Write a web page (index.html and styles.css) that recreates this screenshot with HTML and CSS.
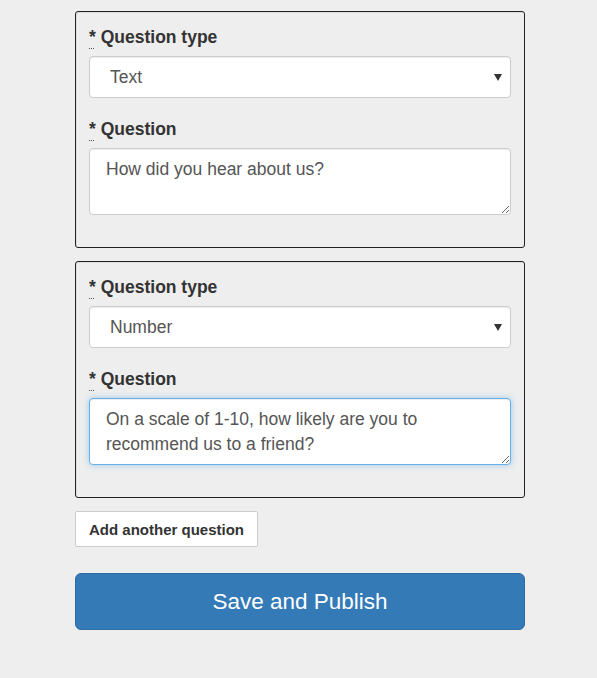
FILE: index.html
```html
<!DOCTYPE html>
<html>
<head>
<meta charset="utf-8">
<link rel="stylesheet" href="styles.css">
</head>
<body>
<div class="page">
  <fieldset class="qbox">
    <div class="group">
      <label class="lbl"><abbr class="req">*</abbr> Question type</label>
      <select class="ctl sel"><option>Text</option></select>
    </div>
    <div class="group">
      <label class="lbl"><abbr class="req">*</abbr> Question</label>
      <textarea class="ctl area">How did you hear about us?</textarea>
    </div>
  </fieldset>
  <fieldset class="qbox">
    <div class="group">
      <label class="lbl"><abbr class="req">*</abbr> Question type</label>
      <select class="ctl sel"><option>Number</option></select>
    </div>
    <div class="group">
      <label class="lbl"><abbr class="req">*</abbr> Question</label>
      <textarea class="ctl area focus">On a scale of 1-10, how likely are you to recommend us to a friend?</textarea>
    </div>
  </fieldset>
  <div class="actions">
    <button class="btn-add">Add another question</button>
  </div>
  <button class="btn-save">Save and Publish</button>
</div>
</body>
</html>
```
FILE: styles.css
```css
html, body {
  margin: 0;
  padding: 0;
  background: #eeeeee;
  font-family: "Liberation Sans", Arial, sans-serif;
  color: #333333;
}
.page {
  width: 450px;
  margin-left: 75px;
  padding-top: 11px;
}
.qbox {
  margin: 0 0 13px 0;
  padding: 13px 13px 14px 13px;
  border: 1px solid #222222;
  border-radius: 3px;
  box-shadow: inset 1px 1px 0 rgba(0,0,0,0.08);
  min-width: 0;
}
.group {
  margin-bottom: 19px;
  display: flex;
  flex-direction: column;
}
.group:last-child {
  margin-bottom: 18px;
}
.lbl {
  display: block;
  font-size: 17.5px;
  font-weight: bold;
  line-height: 24px;
  margin-bottom: 7px;
  color: #333333;
}
.req {
  text-decoration: underline dotted #555555;
  text-underline-offset: 5px;
  text-decoration-thickness: 1px;
  cursor: help;
}
.ctl {
  box-sizing: border-box;
  width: 100%;
  font-family: "Liberation Sans", Arial, sans-serif;
  font-size: 17.5px;
  color: #555555;
  background-color: #ffffff;
  border: 1px solid #cccccc;
  border-radius: 4px;
  box-shadow: inset 0 1px 1px rgba(0,0,0,0.075);
  margin: 0;
}
.sel {
  height: 42px;
  padding: 0 30px 0 20px;
  -webkit-appearance: none;
  appearance: none;
  background-image: url("data:image/svg+xml;utf8,<svg xmlns='http://www.w3.org/2000/svg' width='8' height='7' viewBox='0 0 8 7'><polygon points='0,0 8,0 4,7' fill='%23333'/></svg>");
  background-repeat: no-repeat;
  background-position: right 8px center;
  background-size: 8px 7px;
}
.area {
  height: 67px;
  padding: 8px 16px;
  line-height: 25px;
  resize: vertical;
  display: block;
}
.area.focus {
  border-color: #66afe9;
  box-shadow: inset 0 1px 1px rgba(0,0,0,0.075), 0 0 6px rgba(102,175,233,0.6);
  outline: none;
}
.actions {
  margin-bottom: 26px;
}
.btn-add {
  display: block;
  height: 36px;
  width: 183px;
  padding: 0;
  font-family: "Liberation Sans", Arial, sans-serif;
  font-size: 15px;
  font-weight: bold;
  color: #333333;
  background: #ffffff;
  border: 1px solid #cccccc;
  border-radius: 2px;
}
.btn-save {
  display: block;
  width: 450px;
  height: 57px;
  font-family: "Liberation Sans", Arial, sans-serif;
  font-size: 22.5px;
  color: #ffffff;
  background: #337ab7;
  border: 1px solid #2e6da4;
  border-radius: 6px;
}
```
